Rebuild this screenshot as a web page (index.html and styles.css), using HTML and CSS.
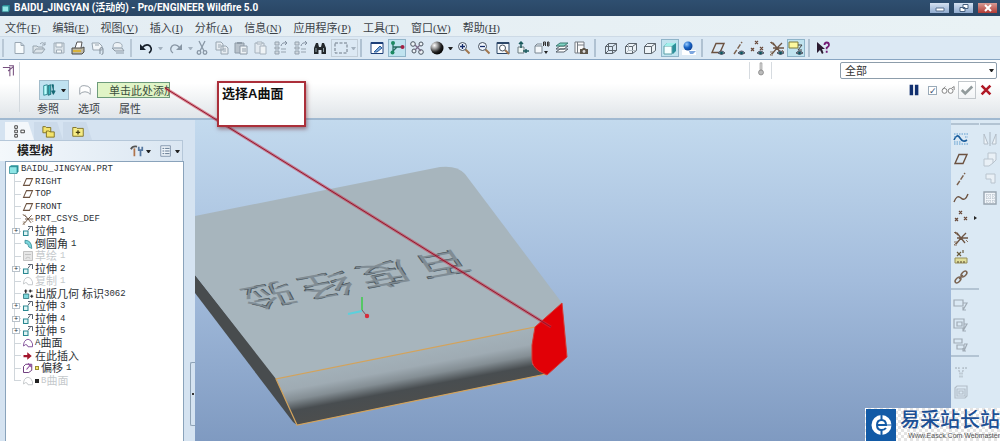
FILE: index.html
```html
<!DOCTYPE html>
<html lang="zh-CN">
<head>
<meta charset="utf-8">
<title>BAIDU_JINGYAN (活动的) - Pro/ENGINEER Wildfire 5.0</title>
<link rel="stylesheet" href="styles.css">
</head>
<body>
<svg class="defs" aria-hidden="true">
  <defs>
    <radialGradient id="ball" cx=".3" cy=".3" r=".75"><stop offset="0" stop-color="#fff"/><stop offset=".35" stop-color="#999"/><stop offset=".7" stop-color="#222"/><stop offset="1" stop-color="#000"/></radialGradient>
    <radialGradient id="blue" cx=".35" cy=".3" r=".8"><stop offset="0" stop-color="#9cf"/><stop offset=".5" stop-color="#1763c4"/><stop offset="1" stop-color="#0a3a8c"/></radialGradient>
  </defs>
  <symbol id="i-eye" viewBox="0 0 16 16"><path d="M8 13q3.500-4 7 0q-3.500 3-7 0z" fill="#6a8a90" stroke="#556"/><circle cx="11.500" cy="13" r="1.300" fill="#0b5560"/></symbol>
  <symbol id="i-new" viewBox="0 0 16 16"><path d="M4 2.500h6l3 3v8H4zM10 2.500v3h3" fill="#f6fafc" stroke="#9aa7b3"/></symbol>
  <symbol id="i-open" viewBox="0 0 16 16"><path d="M2 13V6h4l1 1h5v2M2 13l3-4h9l-3 4z" fill="#dbe3e9" stroke="#98a5b0"/><path d="M9 4q3-3 5 1m0-3v3h-3" fill="none" stroke="#98a5b0"/></symbol>
  <symbol id="i-save" viewBox="0 0 16 16"><path d="M3 3h10v10H3z" fill="#dbe3e9" stroke="#a0adb8"/><path d="M5 3h6v4H5zM5.500 10h5v3h-5z" fill="#f4f8fa" stroke="#a0adb8"/></symbol>
  <symbol id="i-print" viewBox="0 0 16 16"><path d="M5 8l2-6h5l-1 6" fill="#fff" stroke="#555"/><path d="M2 8h10l2-1v5l-2 2H2z" fill="#bfb9a4" stroke="#4a4a48"/><path d="M3 11h8" stroke="#d9b33a" stroke-width="2"/></symbol>
  <symbol id="i-mail" viewBox="0 0 16 16"><path d="M2 3h7l3 3v4H3zM5 5h4" fill="#f2f6f9" stroke="#98a5b0"/><path d="M10 14V9q0-1.500 1.500-1.500T13 9v4q0 1.500-1.500 1.500" fill="none" stroke="#7e8b97"/></symbol>
  <symbol id="i-plot" viewBox="0 0 16 16"><path d="M3 7q0-5 5-4.500t4 5" fill="#edf2f6" stroke="#a0adb8"/><path d="M2 8h10l2 3H5zM6 13h8" fill="#d6dee5" stroke="#8e9ba7"/></symbol>
  <symbol id="i-undo" viewBox="0 0 16 16"><path d="M4 8q4-5 8-2q3 4-1 7" fill="none" stroke="#17202b" stroke-width="1.600"/><path d="M2 4v6h6z" fill="#17202b"/></symbol>
  <symbol id="i-redo" viewBox="0 0 16 16"><path d="M12 8q-4-5-8-2q-3 4 1 7" fill="none" stroke="#8997a5" stroke-width="1.300"/><path d="M14 4v6H8z" fill="#8997a5"/></symbol>
  <symbol id="i-cut" viewBox="0 0 16 16"><path d="M5 1l5 10M11 1L6 11" stroke="#8997a5" stroke-width="1.300"/><g fill="none" stroke="#8997a5" stroke-width="1.300"><circle cx="5" cy="12.500" r="1.800"/><circle cx="11" cy="12.500" r="1.800"/></g></symbol>
  <symbol id="i-copy" viewBox="0 0 16 16"><path d="M2 2h5l2 2v6H2zM7 6h5l2 2v6H7z" fill="#e7edf2" stroke="#98a5b0"/><path d="M4 5h3M4 7h2M9 9h3M9 11h3" stroke="#98a5b0"/></symbol>
  <symbol id="i-paste" viewBox="0 0 16 16"><path d="M2 3h9v10H2z" fill="#b8c2cb" stroke="#8e9ba7"/><path d="M4 2h5v2H4z" fill="#8e9ba7"/><path d="M7 6h7v8H7zM9 9h4M9 11h4" fill="#eef3f6" stroke="#8e9ba7"/></symbol>
  <symbol id="i-paste2" viewBox="0 0 16 16"><path d="M2 3h9v10H2z" fill="#e3eaf0" stroke="#a6b2bd"/><path d="M4 2h5v2H4zM7 6h6v8H7z" fill="#eef3f6" stroke="#a6b2bd"/></symbol>
  <symbol id="i-regen" viewBox="0 0 16 16"><path d="M2 2h4v3H2zM2 7h4v2H2zM2 11h4v3H2zM8 9h5M8 12h5" fill="#cfd8df" stroke="#96a3af"/><path d="M8 6q1-4 5-3m-1-2l2 2-2 2" fill="none" stroke="#8390a0"/></symbol>
  <symbol id="i-find" viewBox="0 0 16 16"><path d="M2 14V8l2-5h2l1 4h2l1-4h2l2 5v6H9.500v-4h-3v4z" fill="#22282c"/><path d="M4 8v4M11.500 8v4" stroke="#8fa2a8"/></symbol>
  <symbol id="i-select" viewBox="0 0 16 16"><path d="M2 3h12v10H2z" fill="none" stroke="#6e7b87" stroke-dasharray="3 1.500"/></symbol>
  <symbol id="i-repaint" viewBox="0 0 16 16"><path d="M2 2.500h12v11H2z" fill="#fff" stroke="#1d3f78"/><path d="M2 3h12" stroke="#1d3f78" stroke-width="2"/><path d="M5 12l6-6 2 2-5 4z" fill="#7aa7d8" stroke="#31609c"/></symbol>
  <symbol id="i-spin" viewBox="0 0 16 16"><path d="M4 3v10M4 7h9M4 11l4-4" stroke="#276c62" stroke-width="1.300"/><g fill="#1c8a62"><circle cx="4" cy="3" r="2"/><circle cx="3.500" cy="12.500" r="2"/></g><circle cx="13.500" cy="7" r="2" fill="#a32043"/></symbol>
  <symbol id="i-orient" viewBox="0 0 16 16"><g fill="#eef4f8" stroke="#4b5560"><circle cx="4" cy="4" r="2.300"/><circle cx="12" cy="4" r="2"/><circle cx="5" cy="11" r="2"/><circle cx="12" cy="12" r="2.300"/></g><path d="M6 5l6 6M11 5l-5 5" stroke="#7a6a88" stroke-width="1.300"/></symbol>
  <symbol id="i-ball" viewBox="0 0 16 16"><circle cx="8" cy="8" r="6.500" fill="url(#ball)"/></symbol>
  <symbol id="i-zin" viewBox="0 0 16 16"><path d="M9.500 9.500l4 4" stroke="#a1764d" stroke-width="2"/><circle cx="6.500" cy="6.500" r="4" fill="#f2f8ff" stroke="#48525f"/><path d="M4 6.500h5M6.500 4v5" stroke="#142b68" stroke-width="1.300"/></symbol>
  <symbol id="i-zout" viewBox="0 0 16 16"><path d="M9.500 9.500l4 4" stroke="#a1764d" stroke-width="2"/><circle cx="6.500" cy="6.500" r="4" fill="#f2f8ff" stroke="#48525f"/><path d="M4 6.500h5" stroke="#142b68" stroke-width="1.300"/></symbol>
  <symbol id="i-refit" viewBox="0 0 16 16"><path d="M2 2.500h12v11H2z" fill="#f4f8fb" stroke="#2c4667"/><path d="M2 3h12" stroke="#2c4667" stroke-width="2"/><path d="M10 10l4 4" stroke="#a1764d" stroke-width="2"/><circle cx="7.500" cy="8" r="3" fill="#fff" stroke="#48525f"/></symbol>
  <symbol id="i-view" viewBox="0 0 16 16"><path d="M3 7h6v6H3z" fill="#eef6f4" stroke="#6c7a80"/><path d="M6 2v6M4 4l2-2 2 2M8 11h6M11 9v4" fill="none" stroke="#1a5a5c" stroke-width="1.500"/></symbol>
  <symbol id="i-saved" viewBox="0 0 16 16"><path d="M1 6h7v7H1zM1 6l2-2h5" fill="#f4f8fb" stroke="#7a8792"/><path d="M9.500 6V2h2v4M9.500 4h2M13.500 2v4h1.500v-4zM13 4h2" fill="none" stroke="#333"/><path d="M10 11h4l-2 3z" fill="#222"/></symbol>
  <symbol id="i-layers" viewBox="0 0 16 16"><path d="M2 12l4-3h8l-4 3zM2 9l4-3h8l-4 3z" fill="#fff" stroke="#555f68"/><path d="M2 6l4-3h8l-4 3z" fill="#7fd4c4" stroke="#3c7a73"/></symbol>
  <symbol id="i-mgr" viewBox="0 0 16 16"><path d="M2 2h9v11H2zM4.500 2v11M4.500 5H11" fill="#fafafa" stroke="#747b82"/><path d="M7 9h2l1-1h2l1 1h2v5H7z" fill="#5d5549"/><circle cx="11" cy="11.500" r="1.400" fill="#ddd"/></symbol>
  <symbol id="i-wire" viewBox="0 0 16 16"><path d="M2.500 6.500h7v7h-7zM5.500 3.500h8v7h-8zM2.500 6.500l3-3M9.500 6.500l4-3M2.500 13.500l3-3M9.500 13.500l4-3" fill="none" stroke="#5c656d"/></symbol>
  <symbol id="i-hid" viewBox="0 0 16 16"><path d="M2.500 6.500h7v7h-7zM2.500 6.500l3-3h8v7l-4 3M9.500 6.500l4-3" fill="#edf3f7" stroke="#5c656d"/><path d="M5.500 4v6.500H13M3 13l3-3" fill="none" stroke="#b2bcc4"/></symbol>
  <symbol id="i-nohid" viewBox="0 0 16 16"><path d="M2.500 6.500h7v7h-7zM2.500 6.500l3-3h8v7l-4 3M9.500 6.500l4-3" fill="#edf3f7" stroke="#5c656d"/></symbol>
  <symbol id="i-shade" viewBox="0 0 16 16"><path d="M2 6l3-3h9v8l-3 3z" fill="#2c8f9a"/><path d="M2 6h8v8H2z" fill="#f5ffff" stroke="#5aa0a8"/><path d="M2 6l3-3h9l-4 3z" fill="#9ff0ea"/></symbol>
  <symbol id="i-blue" viewBox="0 0 16 16"><path d="M1 10h14v5H1z" fill="#fff"/><path d="M8 11h7l-3 3H9z" fill="#7ea7df"/><circle cx="7" cy="6" r="4.500" fill="url(#blue)"/></symbol>
  <symbol id="i-plane" viewBox="0 0 16 16"><path d="M2 12.500l4-9h8l-4 9z" fill="none" stroke="#6c5240" stroke-width="1.400"/></symbol>
  <symbol id="i-axis" viewBox="0 0 16 16"><path d="M4 14L12 2" stroke="#7d6350" stroke-width="1.500" stroke-dasharray="5 1.500"/></symbol>
  <symbol id="i-pts" viewBox="0 0 16 16"><path d="M6 1l3 3M9 1L6 4M2 8l3 3M5 8l-3 3M11 7l3 3M14 7l-3 3" stroke="#6a4b3c" stroke-width="1.200"/></symbol>
  <symbol id="i-csys" viewBox="0 0 16 16"><path d="M2 2l3 3M8 8h7M8 8L4 3M8 8l5-5M8 8l-5 6M8 8l4 5M8 8H4" stroke="#6d5544" stroke-width="1.300"/><path d="M1 2l2 2 1-2M1 12h3l-3 3h3M13 10l2 2" fill="none" stroke="#8b7562"/></symbol>
  <symbol id="i-note" viewBox="0 0 16 16"><path d="M1 2h9v6H1z" fill="#fcf9a0" stroke="#7f7a3a"/><path d="M10 5h4l-4 5h4" fill="none" stroke="#444"/></symbol>
  <symbol id="i-help" viewBox="0 0 16 16"><path d="M2 2v11l3-3 2 4 1.500-1L7 9h3z" fill="#2b1b30"/><path d="M9.500 5q0-2.500 2.200-2.500T14 5q0 1.200-2.300 2.800v1.500m0 1.500v2" fill="none" stroke="#731b74" stroke-width="1.800"/></symbol>
  <symbol id="i-datum" viewBox="0 0 16 16"><path d="M1 9q3-7 6-2t7 2" fill="none" stroke="#1a5d9c" stroke-width="1.600"/><path d="M1 3h14M1 13h14M1 6h2M12 6h3M1 11h7" stroke="#5b9bcd" stroke-dasharray="1.500 1"/></symbol>
  <symbol id="i-curve" viewBox="0 0 16 16"><path d="M1 12q3-8 7-4t7-4" fill="none" stroke="#6c5240" stroke-width="1.400"/></symbol>
  <symbol id="i-off" viewBox="0 0 16 16"><path d="M2 9h12v5H2z" fill="#e0de9a" stroke="#97905a"/><path d="M4 3l4 4M8 3L4 7M10 1v3M5 12v2M8 12v2M11 12v2" stroke="#6a5c3c" stroke-width="1.200"/></symbol>
  <symbol id="i-chain" viewBox="0 0 16 16"><g fill="none" stroke="#7a6350" stroke-width="1.500"><ellipse cx="5" cy="11" rx="3.500" ry="2" transform="rotate(-45 5 11)"/><ellipse cx="11" cy="5" rx="3.500" ry="2" transform="rotate(-45 11 5)"/><path d="M6 10l4-4"/></g></symbol>
  <symbol id="i-an1" viewBox="0 0 16 16"><path d="M1 3h9v6H1zM10 6h4l-4 7m0-3v3h3" fill="none" stroke="#a0abb5" stroke-width="1.200"/></symbol>
  <symbol id="i-an2" viewBox="0 0 16 16"><path d="M1 2h10v9H1zM4 5h5v4H4zM11 7h3l-4 7m0-3v3h3" fill="none" stroke="#a0abb5" stroke-width="1.200"/></symbol>
  <symbol id="i-an3" viewBox="0 0 16 16"><path d="M1 2h8v4H1zM4 8h7v4H4zM11 7h3l-3 7m-1-3v3h3" fill="none" stroke="#a0abb5" stroke-width="1.200"/></symbol>
  <symbol id="i-hole" viewBox="0 0 16 16"><path d="M2 4h4v3l1 1v6M14 4h-4v3l-1 1v6" fill="none" stroke="#b3bec8" stroke-width="1.300" stroke-dasharray="2 1"/></symbol>
  <symbol id="i-shell" viewBox="0 0 16 16"><path d="M2 4l2-2h10v10l-2 2H2zM4 5h8v7H4zM6 7h4v3H6z" fill="none" stroke="#b3bec8" stroke-width="1.200"/></symbol>
  <symbol id="i-mirror" viewBox="0 0 16 16"><path d="M8 1v14" stroke="#a9b5c0"/><path d="M6 13H2V3zM10 13h4V3z" fill="#edf3f8" stroke="#b3bec8"/></symbol>
  <symbol id="i-merge" viewBox="0 0 16 16"><path d="M6 2h8v7l-3 3-4 3H2V8h4z" fill="#e9f0f6" stroke="#b9c4ce"/><path d="M6 8h5v4" fill="none" stroke="#b9c4ce"/></symbol>
  <symbol id="i-trim" viewBox="0 0 16 16"><path d="M4 3h9v9H9V8H4z" fill="#e9f0f6" stroke="#b9c4ce"/></symbol>
  <symbol id="i-grid" viewBox="0 0 16 16"><path d="M2 2h12v12H2z" fill="#f2f6fa" stroke="#98a4af" stroke-width="1.400"/><path d="M5 2v12M8 2v12M11 2v12M2 5h12M2 8h12M2 11h12" stroke="#b4bfc9" stroke-dasharray="1 1"/></symbol>
  <symbol id="i-part" viewBox="0 0 16 16"><path d="M2 5l2-2h10v8l-2 3z" fill="#279199"/><path d="M2 5h10v9H2z" fill="#8fe6e6" stroke="#2b8a92"/></symbol>
  <symbol id="i-ext" viewBox="0 0 16 16"><path d="M2 8h6v6H2z" fill="#dff5f5" stroke="#2a8791" stroke-width="1.400"/><path d="M8 7l3-4M8 2h6v6" fill="none" stroke="#505a6a" stroke-width="1.300"/></symbol>
  <symbol id="i-round" viewBox="0 0 16 16"><path d="M4 3q9 0 9 11l-4-2Q9 7 4 7z" fill="#7cd6dc" stroke="#2c8590"/></symbol>
  <symbol id="i-sketch" viewBox="0 0 16 16"><path d="M2 2h12v12H2zM4 6h8M5 12q1-4 6-1" fill="#e6e6e6" stroke="#c0c0c0" stroke-width="1.300"/></symbol>
  <symbol id="i-pub" viewBox="0 0 16 16"><path d="M2 8h7v6H2z" fill="#7fd8dc" stroke="#1f6a72"/><path d="M5 7V2M3 4h4M9 4h5M11 2v4M11 11h4M13 9v4" stroke="#222" stroke-width="1.600"/></symbol>
  <symbol id="i-surf" viewBox="0 0 16 16"><path d="M2 12q0-8 6-9q4 0 6 6v4H8q-1-3-3-3z" fill="none" stroke="currentColor" stroke-width="1.300"/></symbol>
  <symbol id="i-insert" viewBox="0 0 16 16"><path d="M2 6.500h5V3l6 5-6 5V9.500H2z" fill="#a3162c"/></symbol>
  <symbol id="i-offset" viewBox="0 0 16 16"><path d="M2 6l3-3h8v8l-4 3H2z" fill="#fff" stroke="#6d3b7c" stroke-width="1.300"/><path d="M6 10l6-7M8 2l5 5" stroke="#8e4a9d" stroke-width="1.500"/></symbol>
</svg>

<div class="app">
  <header class="title">
    <svg class="ico small"><use href="#i-part"/></svg>
    <h1>BAIDU_JINGYAN (活动的) - Pro/ENGINEER Wildfire 5.0</h1>
    <div class="win">
      <button aria-label="最小化"><svg viewBox="0 0 18 10"><path d="M5 5h8v3H5z" fill="#fff" stroke="#59718f"/></svg></button>
      <button aria-label="还原"><svg viewBox="0 0 18 10"><path d="M8 1.500h5v4H8zM5 4.500h5v4H5z" fill="#fff" stroke="#46607f"/></svg></button>
      <button class="close" aria-label="关闭"><svg viewBox="0 0 18 10"><path d="M6 2l6 6M12 2L6 8" stroke="#fff" stroke-width="2"/></svg></button>
    </div>
  </header>

  <nav class="menu">
    <a href="#">文件<span>(<u>F</u>)</span></a><a href="#">编辑<span>(<u>E</u>)</span></a><a href="#">视图<span>(<u>V</u>)</span></a><a href="#">插入<span>(<u>I</u>)</span></a><a href="#">分析<span>(<u>A</u>)</span></a><a href="#">信息<span>(<u>N</u>)</span></a><a href="#">应用程序<span>(<u>P</u>)</span></a><a href="#">工具<span>(<u>T</u>)</span></a><a href="#">窗口<span>(<u>W</u>)</span></a><a href="#">帮助<span>(<u>H</u>)</span></a>
  </nav>

  <div class="toolbar">
    <div class="group g-file">
      <button aria-label="新建"><svg class="ico"><use href="#i-new"/></svg></button>
      <button aria-label="打开"><svg class="ico"><use href="#i-open"/></svg></button>
      <button aria-label="保存"><svg class="ico"><use href="#i-save"/></svg></button>
      <button aria-label="打印"><svg class="ico"><use href="#i-print"/></svg></button>
      <button aria-label="邮件"><svg class="ico"><use href="#i-mail"/></svg></button>
      <button aria-label="链接"><svg class="ico"><use href="#i-plot"/></svg></button>
    </div>
    <div class="group g-undo">
      <button aria-label="撤消"><svg class="ico"><use href="#i-undo"/></svg></button><i class="caret dim"></i>
      <button aria-label="重做"><svg class="ico"><use href="#i-redo"/></svg></button><i class="caret dim"></i>
    </div>
    <div class="group g-edit">
      <button aria-label="剪切"><svg class="ico"><use href="#i-cut"/></svg></button>
      <button aria-label="复制"><svg class="ico"><use href="#i-copy"/></svg></button>
      <button aria-label="粘贴"><svg class="ico"><use href="#i-paste"/></svg></button>
      <button aria-label="选择性粘贴"><svg class="ico"><use href="#i-paste2"/></svg></button>
      <button aria-label="再生"><svg class="ico"><use href="#i-regen"/></svg></button>
      <button aria-label="再生管理器"><svg class="ico"><use href="#i-regen"/></svg></button>
      <button aria-label="查找"><svg class="ico"><use href="#i-find"/></svg></button>
      <button class="split" aria-label="选取"><svg class="ico"><use href="#i-select"/></svg><i class="caret dim"></i></button>
    </div>
    <div class="group g-view1">
      <button aria-label="重画"><svg class="ico"><use href="#i-repaint"/></svg></button>
      <button class="on" aria-label="旋转中心"><svg class="ico"><use href="#i-spin"/></svg></button>
      <button aria-label="定向模式"><svg class="ico"><use href="#i-orient"/></svg></button>
      <button aria-label="外观库"><svg class="ico"><use href="#i-ball"/></svg></button>
    </div>
    <i class="caret"></i>
    <div class="group g-view2">
      <button aria-label="放大"><svg class="ico"><use href="#i-zin"/></svg></button>
      <button aria-label="缩小"><svg class="ico"><use href="#i-zout"/></svg></button>
      <button aria-label="重新调整"><svg class="ico"><use href="#i-refit"/></svg></button>
      <button aria-label="重定向"><svg class="ico"><use href="#i-view"/></svg></button>
      <button aria-label="已保存视图"><svg class="ico"><use href="#i-saved"/></svg></button>
      <button aria-label="层"><svg class="ico"><use href="#i-layers"/></svg></button>
      <button aria-label="视图管理器"><svg class="ico"><use href="#i-mgr"/></svg></button>
    </div>
    <div class="group g-model">
      <button aria-label="线框"><svg class="ico"><use href="#i-wire"/></svg></button>
      <button aria-label="隐藏线"><svg class="ico"><use href="#i-hid"/></svg></button>
      <button aria-label="无隐藏线"><svg class="ico"><use href="#i-nohid"/></svg></button>
      <button class="on" aria-label="着色"><svg class="ico"><use href="#i-shade"/></svg></button>
      <button aria-label="增强真实感"><svg class="ico"><use href="#i-blue"/></svg></button>
    </div>
    <div class="group g-datum">
      <button aria-label="平面显示"><svg class="ico"><use href="#i-plane"/><use href="#i-eye"/></svg></button>
      <button aria-label="轴显示"><svg class="ico"><use href="#i-axis"/><use href="#i-eye"/></svg></button>
      <button aria-label="点显示"><svg class="ico"><use href="#i-pts"/><use href="#i-eye"/></svg></button>
      <button aria-label="坐标系显示"><svg class="ico"><use href="#i-csys"/><use href="#i-eye"/></svg></button>
      <button class="on" aria-label="注释显示"><svg class="ico"><use href="#i-note"/><use href="#i-eye"/></svg></button>
    </div>
    <div class="group"><button aria-label="帮助"><svg class="ico"><use href="#i-help"/></svg></button></div>
  </div>

  <section class="dash">
    <div class="dash-side"><svg class="ico" viewBox="0 0 16 16"><path d="M1 4h8v10M7 8l6-5M13 13V2H8" fill="none" stroke="#77507f" stroke-width="1.200"/></svg></div>
    <div class="dash-main">
      <div class="dash-row">
        <button class="ref" aria-label="偏移类型"><svg class="ico" viewBox="0 0 16 16"><path d="M2 3l4-1v11l-4 1z" fill="#bff" stroke="#22808a"/><path d="M7 3l3-1v11l-3 1z" fill="#38b2ba" stroke="#1b6870"/><path d="M11 2h2v8m-2-1l2 4 2-4z" fill="#146874" stroke="#146874"/></svg><i class="caret"></i></button>
        <svg class="ico quilt" viewBox="0 0 16 16"><path d="M2 13V7q0-4 5-4t7 3v7q-2-3-6-3t-6 3z" fill="#fff" stroke="#8f98a0"/></svg>
        <input class="collector" aria-label="收集器" value="单击此处添加项目">
      </div>
      <div class="dash-tabs"><button>参照</button><button>选项</button><button>属性</button></div>
    </div>
    <div class="dash-right">
      <div class="status">
        <span class="thermo"><svg class="ico" viewBox="0 0 16 16"><path d="M7 1h2v8h-2z" fill="#eee" stroke="#999"/><circle cx="8" cy="12" r="2.800" fill="#bbb" stroke="#888"/></svg></span>
        <label class="filter"><select aria-label="过滤器"><option>全部</option></select><i class="caret"></i></label>
      </div>
      <div class="confirm">
        <button aria-label="暂停"><svg class="ico" viewBox="0 0 16 16"><path d="M3 2h4v12H3zM9 2h4v12H9z" fill="#12306f"/></svg></button>
        <input type="checkbox" checked aria-label="预览">
        <button class="preview" aria-label="眼镜"><svg class="ico" viewBox="0 0 16 16"><g fill="#fff" stroke="#777"><circle cx="4" cy="9" r="2.800"/><circle cx="11" cy="9" r="2.800"/><path d="M2 7l3-3M12 6l3-2v4"/></g></svg></button>
        <button class="ok" aria-label="确定"><svg class="ico" viewBox="0 0 16 16"><path d="M2 8l4 4 8-8" fill="none" stroke="#929b9c" stroke-width="3"/></svg></button>
        <button aria-label="取消"><svg class="ico" viewBox="0 0 16 16"><path d="M3 3l10 10M13 3L3 13" stroke="#b01825" stroke-width="3"/></svg></button>
      </div>
    </div>
  </section>

  <main class="work">
    <aside class="side">
      <div class="tabs">
        <button class="tab active" aria-label="模型树"><svg class="ico" viewBox="0 0 16 16"><path d="M2 2h3v3H2zM2 7h3v3H2zM2 12h3v3H2zM9 7h4v3H9z" fill="#fff" stroke="#333"/></svg></button>
        <button class="tab" aria-label="文件夹浏览器"><svg class="ico" viewBox="0 0 16 16"><path d="M1 3h3l1 1h5v6H1z" fill="#f3e36c" stroke="#7a6c1c"/><path d="M5 8h3l1 1h5v6H5z" fill="#f3e36c" stroke="#7a6c1c"/></svg></button>
        <button class="tab" aria-label="收藏夹"><svg class="ico" viewBox="0 0 16 16"><path d="M2 4h4l1 1h7v9H2z" fill="#f6ec85" stroke="#7a6c1c"/><path d="M8 7v5M5.500 9.500h5" stroke="#443c10" stroke-width="1.500"/></svg></button>
      </div>
      <div class="side-head">
        <h2>模型树</h2>
        <button aria-label="设置"><svg class="ico" viewBox="0 0 16 16"><path d="M5 5v9" stroke="#b0744c" stroke-width="2"/><path d="M1 6q2-4 7-3" fill="none" stroke="#555" stroke-width="2"/><path d="M10 3v4h4V3M12 7v7" fill="none" stroke="#5577a0" stroke-width="2"/></svg><i class="caret"></i></button>
        <button aria-label="显示"><svg class="ico" viewBox="0 0 16 16"><path d="M2 2h11v12H2z" fill="#eef4fa" stroke="#7a8ea5"/><path d="M4 5h2M7 5h5M4 8h2M7 8h5M4 11h2M7 11h5" stroke="#4f6680"/></svg><i class="caret"></i></button>
      </div>
      <ul class="tree">
        <li class="root"><svg class="ico"><use href="#i-part"/></svg><span class="latin">BAIDU_JINGYAN.PRT</span></li>
        <li><svg class="ico"><use href="#i-plane"/></svg><span class="latin">RIGHT</span></li>
        <li><svg class="ico"><use href="#i-plane"/></svg><span class="latin">TOP</span></li>
        <li><svg class="ico"><use href="#i-plane"/></svg><span class="latin">FRONT</span></li>
        <li><svg class="ico"><use href="#i-csys"/></svg><span class="latin">PRT_CSYS_DEF</span></li>
        <li class="more"><svg class="ico"><use href="#i-ext"/></svg>拉伸 <span class="latin">1</span></li>
        <li><svg class="ico"><use href="#i-round"/></svg>倒圆角 <span class="latin">1</span></li>
        <li class="off"><svg class="ico"><use href="#i-sketch"/></svg>草绘 <span class="latin">1</span></li>
        <li class="more"><svg class="ico"><use href="#i-ext"/></svg>拉伸 <span class="latin">2</span></li>
        <li class="off"><svg class="ico"><use href="#i-surf"/></svg>复制 <span class="latin">1</span></li>
        <li><svg class="ico"><use href="#i-pub"/></svg>出版几何 标识<span class="latin">3062</span></li>
        <li class="more"><svg class="ico"><use href="#i-ext"/></svg>拉伸 <span class="latin">3</span></li>
        <li class="more"><svg class="ico"><use href="#i-ext"/></svg>拉伸 <span class="latin">4</span></li>
        <li class="more"><svg class="ico"><use href="#i-ext"/></svg>拉伸 <span class="latin">5</span></li>
        <li><svg class="ico violet"><use href="#i-surf"/></svg><span class="latin">A</span>曲面</li>
        <li><svg class="ico"><use href="#i-insert"/></svg>在此插入</li>
        <li><svg class="ico"><use href="#i-offset"/></svg><b class="mark"></b>偏移 <span class="latin">1</span></li>
        <li class="off"><svg class="ico"><use href="#i-surf"/></svg><b class="mark solid"></b><span class="latin">B</span>曲面</li>
      </ul>
      <div class="sash"></div>
    </aside>

    <div class="canvas">
      <svg viewBox="195 120 756 321" preserveAspectRatio="xMinYMin meet" role="img" aria-label="三维模型">
        <defs><linearGradient id="edge" gradientUnits="userSpaceOnUse" x1="400" y1="354" x2="409" y2="402"><stop offset="0" stop-color="#a3b1b9"/><stop offset=".3" stop-color="#9fabb3"/><stop offset=".52" stop-color="#848e94"/><stop offset=".74" stop-color="#484d50"/><stop offset="1" stop-color="#4c4e4e"/></linearGradient></defs>
        <path d="M195 275L277 379 297 425 293 422 195 293z" fill="#484c4e"/>
        <path d="M195 216L440 167Q457 165 465 174L562 303 535 328 276 379 195 275z" fill="#a7b5bd"/>
        <path d="M276 379L535 327 532 345V364L546 374 297 425z" fill="url(#edge)"/>
        <path d="M535 327L276 379 297 425 546 374" fill="none" stroke="#d3a35c" stroke-width="1.200"/>
        <text class="engraved" transform="matrix(-1 .18 -.36 -.52 461 250)" x="0 58 116 174" y="0">百度经验</text>
        <path d="M362 310V297" stroke="#55c765" stroke-width="2"/><path d="M362 311l-14 3" stroke="#5cd0dc" stroke-width="2"/><path d="M362 310l4 5" stroke="#7a5560"/><circle cx="367" cy="316" r="2.200" fill="#d92a3a"/>
        <path d="M535 327L562 303 567 357 547 375 539 371Q532 366 532 360V345z" fill="#e10006" stroke="#d83830"/>
      </svg>
    </div>

    <aside class="tools">
      <div class="col">
        <button aria-label="草绘"><svg class="ico"><use href="#i-datum"/></svg></button>
        <button aria-label="平面"><svg class="ico"><use href="#i-plane"/></svg></button>
        <button aria-label="轴"><svg class="ico"><use href="#i-axis"/></svg></button>
        <button aria-label="曲线"><svg class="ico"><use href="#i-curve"/></svg></button>
        <button class="fly" aria-label="点"><svg class="ico"><use href="#i-pts"/></svg></button>
        <button aria-label="坐标系"><svg class="ico"><use href="#i-csys"/></svg></button>
        <button aria-label="分析"><svg class="ico"><use href="#i-off"/></svg></button>
        <button aria-label="参照"><svg class="ico"><use href="#i-chain"/></svg></button>
        <hr>
        <button aria-label="注释"><svg class="ico"><use href="#i-an1"/></svg></button>
        <button aria-label="注释特征"><svg class="ico"><use href="#i-an2"/></svg></button>
        <button aria-label="传播"><svg class="ico"><use href="#i-an3"/></svg></button>
        <hr>
        <button aria-label="孔"><svg class="ico"><use href="#i-hole"/></svg></button>
        <button aria-label="壳"><svg class="ico"><use href="#i-shell"/></svg></button>
      </div>
      <div class="col">
        <button aria-label="镜像"><svg class="ico"><use href="#i-mirror"/></svg></button>
        <button aria-label="合并"><svg class="ico"><use href="#i-merge"/></svg></button>
        <button aria-label="修剪"><svg class="ico"><use href="#i-trim"/></svg></button>
        <button aria-label="阵列"><svg class="ico"><use href="#i-grid"/></svg></button>
      </div>
    </aside>
  </main>

  <svg class="leader" aria-hidden="true"><path class="glow" d="M165 88L551 327"/><path d="M165 88L551 327"/></svg>
  <div class="callout">选择A曲面</div>

  <div class="brand">
    <svg viewBox="0 0 30 32"><path d="M0 0h30v32H0z" fill="#125aa6"/><circle cx="15.500" cy="16" r="10" fill="#fff"/><path d="M15.500 5v6M15.500 21v6" stroke="#125aa6" stroke-width="2"/><path d="M11 16h9q0-5-4.500-5T11 16t4.500 5q3 0 4.500-2" fill="none" stroke="#125aa6" stroke-width="2"/><path d="M20 16h6" stroke="#125aa6"/></svg>
    <div class="brand-text"><strong>易采站长站</strong><small>Www.Easck.Com Webmaster</small></div>
  </div>
</div>
</body>
</html>
```
FILE: styles.css
```css
* { box-sizing: border-box; }
body {
  margin: 0;
  font: 11px/12px "Liberation Sans", "Noto Sans CJK SC", sans-serif;
  color: #3c4248;
}
button {
  display: flex;
  align-items: center;
  justify-content: center;
  margin: 0;
  padding: 0;
  border: 0;
  background: none;
  font: inherit;
  color: inherit;
}
.defs { position: absolute; width: 0; height: 0; }
.ico { display: block; flex: none; width: 14px; height: 14px; }
.ico.small { width: 10px; height: 10px; }
.caret {
  flex: none;
  width: 5px;
  border: solid transparent;
  border-width: 3px 2px 0;
  border-top-color: #222;
}
.caret.dim { border-top-color: #a4b2bf; }

.app {
  position: relative;
  display: flex;
  flex-direction: column;
  min-height: 100vh;
  overflow: hidden;
  background: #dce8f3;
}

.title {
  display: flex;
  align-items: center;
  gap: 3px;
  height: 16px;
  padding: 0 3px 0 1px;
  background: linear-gradient(#2f4f70, #294563);
  color: #fff;
}
.title h1 {
  flex: 1;
  margin: 0;
  font: bold 10px/16px Roboto, "Noto Sans CJK SC", sans-serif;
}
.win { display: flex; gap: 5px; }
.win button { width: 19px; height: 10px; background: linear-gradient(#d5e2f1, #8fabcf); }
.win .close { background: linear-gradient(#d69b95, #b23b35); }
.win svg { width: 18px; height: 10px; }

.menu {
  display: flex;
  align-items: center;
  gap: 12px;
  height: 20px;
  padding: 4px 5px 0;
  background: linear-gradient(90deg, #e4edf3, #e9f2f5);
}
.menu a { color: #3c4248; text-decoration: none; white-space: nowrap; }
.menu span { font-family: "Liberation Serif", serif; }
.latin { font-family: "Liberation Mono", monospace; font-size: 9px; }

.toolbar {
  display: flex;
  align-items: center;
  height: 24px;
  padding-left: 2px;
  border-top: 1px solid #cddae6;
  border-bottom: 1px solid #88a5c2;
  background: #dce9f4;
}
.toolbar .ico { width: 16px; height: 16px; }
.group { display: flex; align-items: center; justify-content: space-between; }
.group button { width: 18px; height: 18px; }
.group .on { background: #c0e3ef; outline: 1px solid #8fb4c8; outline-offset: -1px; }
.g-file, .g-view1, .g-model, .g-datum, .g-datum + .group { padding-left: 6px; }
.g-file { width: 125px; border-left: 2px solid #b9c8d6; }
.g-undo { width: 63px; margin-left: 3px; padding-left: 5px; border-left: 2px solid #b9c8d6; }
.g-edit { width: 165px; }
.g-edit .split { gap: 2px; width: 27px; border: 1px solid #c2ced8; }
.g-view1 { width: 86px; margin-left: 2px; margin-right: 2px; border-left: 2px solid #b0c2d2; }
.g-view2 { width: 135px; margin-left: 2px; }
.g-model { width: 104px; margin-left: 4px; border-left: 2px solid #b0c2d2; }
.g-datum { width: 104px; margin-left: 3px; border-left: 2px solid #b0c2d2; }
.g-datum + .group { margin-left: 3px; padding-left: 4px; border-left: 2px solid #b0c2d2; }

.dash {
  display: flex;
  height: 60px;
  border-bottom: 2px solid #a0b9d1;
  background: linear-gradient(#fff 40%, #e0e5e9);
}
.dash-side { width: 20px; margin: 2px 0 6px; padding: 2px; border-right: 1px solid #d3d9de; }
.dash-main { flex: 1; padding: 21px 0 0 20px; }
.dash-row { display: flex; align-items: center; height: 18px; }
.ref {
  gap: 5px;
  width: 28px;
  height: 18px;
  background: #c0e2f0;
  outline: 1px solid #a2bccb;
}
.quilt { margin: 0 5px 0 10px; }
.collector {
  width: 73px;
  height: 16px;
  padding: 0 0 0 11px;
  border: 1px solid #6d9b7b;
  background: #e0f4c6;
  color: #3c5040;
  font: inherit;
}
.dash-tabs { display: flex; gap: 19px; margin: 4px 0 0 -3px; }
.dash-tabs button { height: 12px; }
.dash-right { padding: 2px 3px 0 0; }
.status { display: flex; justify-content: flex-end; height: 17px; }
.thermo {
  display: flex;
  justify-content: center;
  width: 23px;
  margin-right: 68px;
  border: solid #d6dbe0;
  border-width: 0 1px;
}
.filter { position: relative; width: 157px; }
.filter select {
  display: block;
  width: 100%;
  height: 17px;
  padding: 0 4px;
  border: 1px solid #8d9dab;
  border-radius: 2px;
  appearance: none;
  background: #fff;
  color: #333;
  font: inherit;
}
.filter .caret { position: absolute; top: 7px; right: 3px; }
.confirm { display: flex; align-items: center; justify-content: flex-end; gap: 3px; height: 22px; padding-right: 4px; }
.confirm input {
  display: grid;
  place-items: center;
  width: 9px;
  height: 9px;
  margin: 0 1px 0 4px;
  border: 1px solid #9aaab8;
  appearance: none;
  background: #fff;
}
.confirm input:checked::after { content: "✓"; font: bold 9px/9px "DejaVu Sans", sans-serif; color: #3a4d70; }
.confirm .ok { width: 18px; height: 18px; border: 1px solid #c2c7cb; }

.work { flex: 1; display: flex; }
.side {
  position: relative;
  display: flex;
  flex-direction: column;
  flex: none;
  width: 195px;
  padding: 2px 12px 0 5px;
  background: #d5e3f1;
}
.tabs { display: flex; height: 18px; }
.tab { width: 29px; clip-path: polygon(0 0, 80% 0, 100% 100%, 0 100%); background: #cbdaea; }
.tab.active { background: #f3f7fb; }
.side-head {
  display: flex;
  align-items: center;
  gap: 8px;
  height: 21px;
  margin-left: -5px;
  padding: 0 2px 0 17px;
  border: solid #b5c7d9;
  border-width: 1px 1px 0 0;
  background: linear-gradient(90deg, #f4f8fb, #dae6f2);
}
.side-head h2 { flex: 1; margin: 0; font-size: 12px; color: #222; }
.side-head button { gap: 2px; }
.tree {
  position: relative;
  flex: 1;
  display: grid;
  grid-template-rows: repeat(18, 1fr);
  width: 179px;
  margin: 0;
  padding: 1px 0 54px 16px;
  border: 1px solid #8aa3bb;
  border-bottom: 0;
  background: #fff;
  list-style: none;
  color: #2c3136;
}
.tree::before {
  content: "";
  position: absolute;
  top: 12px;
  bottom: 60px;
  left: 8px;
  border-left: 1px solid #d0d6db;
}
.tree li { position: relative; display: flex; align-items: center; min-height: 0; white-space: pre; }
.tree .ico { width: 12px; height: 12px; margin-right: 1px; }
.tree .root { margin-left: -14px; }
.tree li:not(.root)::before {
  content: "";
  position: absolute;
  left: -8px;
  width: 7px;
  border-top: 1px solid #d0d6db;
}
.tree .more::after {
  content: "+";
  position: absolute;
  left: -10px;
  width: 6px;
  border: 1px solid #b9c2ca;
  background: #fff;
  font: 7px/4px "Liberation Sans", sans-serif;
  text-align: center;
}
.tree .off { color: #c5c9cc; }
.tree .violet { color: #85539b; }
.mark { width: 4px; height: 4px; margin-right: 2px; border: 1px solid #9a8b30; background: #f5e86b; }
.mark.solid { border-color: #222; background: #222; }
.sash {
  position: absolute;
  right: 0;
  bottom: 15px;
  display: grid;
  place-items: center;
  width: 5px;
  height: 64px;
  border: 1px solid #8fa3b6;
  border-right: 0;
  border-radius: 2px 0 0 2px;
}
.sash::before { content: ""; width: 2px; height: 2px; background: #333; }

.canvas { flex: 1; min-width: 0; background: linear-gradient(#c3daee, #a3bcdc 50%, #7f9ac1); }
.canvas svg { display: block; width: 100%; }
.engraved { font: 400 50px "Noto Sans CJK SC", sans-serif; fill: #808c94; stroke: #4a555c; stroke-width: 1px; stroke-dasharray: 14 22; }

.tools { display: flex; flex: none; gap: 1px; width: 49px; background: #dbe9f4; }
.tools .ico { width: 16px; height: 16px; }
.col { flex: 1; margin-top: 3px; padding-top: 4px; border-top: 2px solid #b3c4d3; }
.col:first-child { flex: 0 0 28px; }
.col button { position: relative; width: 20px; height: 20px; }
.col button:nth-child(3n) { height: 19px; }
.col hr { width: 28px; margin: 1px 0 5px; border: 0; border-top: 2px solid #b3c4d3; }
.fly::after {
  content: "";
  position: absolute;
  right: -6px;
  border: solid transparent;
  border-width: 2px 0 2px 3px;
  border-left-color: #222;
}

.leader { position: absolute; inset: 0; width: 100%; height: 100%; pointer-events: none; }
.leader path { fill: none; stroke: #93162c; stroke-width: 1px; }
.leader .glow { stroke: #c8304888; stroke-width: 3px; }
.callout {
  position: absolute;
  top: 81px;
  left: 217px;
  width: 89px;
  height: 46px;
  padding: 3px;
  border: 2px solid #ab2f3a;
  background: #fff;
  box-shadow: 1px 2px 4px #70303a99;
  color: #111;
  font-size: 13px;
  font-weight: bold;
  line-height: 16px;
}
.brand {
  position: absolute;
  right: 0;
  bottom: 0;
  display: flex;
  width: 135px;
  height: 33px;
  padding: 1px 0 0 1px;
  background: repeating-conic-gradient(#e4e4e4 0 25%, #fff 0 50%) 0 0 / 6px 6px;
}
.brand svg { width: 30px; height: 32px; }
.brand-text { flex: 1; padding-left: 4px; white-space: nowrap; overflow: hidden; }
.brand strong { display: block; font-size: 20px; line-height: 23px; font-weight: 500; color: #1b4f95; }
.brand small { display: block; font-size: 7px; line-height: 8px; color: #555; text-align: right; }
```
